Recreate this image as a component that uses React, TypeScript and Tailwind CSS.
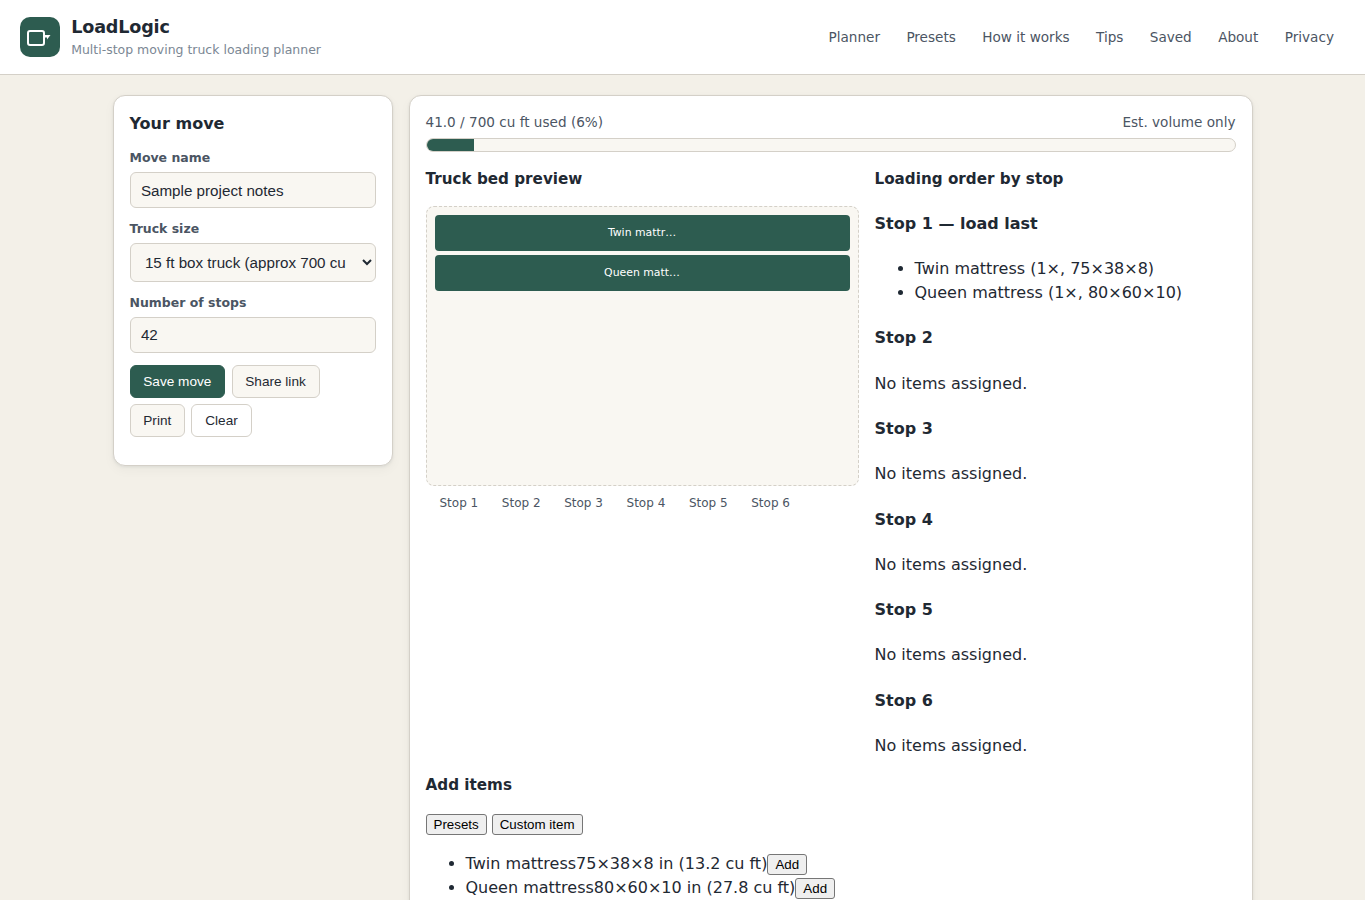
import React from "react";

const nav = ["Planner", "Presets", "How it works", "Tips", "Saved", "About", "Privacy"];
const emptyStops = [2, 3, 4, 5, 6];
const presets = [
  { name: "Twin mattress", size: "75×38×8 in (13.2 cu ft)" },
  { name: "Queen mattress", size: "80×60×10 in (27.8 cu ft)" },
];

const card =
  "rounded-[12px] border border-[#d4d0c8] bg-white p-4 shadow-[0_1px_3px_rgba(31,41,51,0.08),0_4px_12px_rgba(31,41,51,0.04)]";
const field =
  "block w-full rounded-[6px] border border-[#d4d0c8] bg-[#f9f7f2] px-[10.4px] font-['Liberation_Sans',sans-serif] text-[15.2px] text-[#1f2933]";
const label = "mb-[4.8px] block text-[12.48px] font-semibold leading-[19.2px] text-[#4b5563]";
const btn =
  "h-[33px] rounded-[6px] border px-[12.8px] font-['Liberation_Sans',sans-serif] text-[13.6px] leading-none";
const plainBtn =
  "h-[21px] rounded-[3px] border border-[#767676] bg-[#efefef] px-[7px] font-['Liberation_Sans',sans-serif] text-[13.333px] leading-[15px] text-black";

function Logo() {
  return (
    <svg width="40" height="40" viewBox="0 0 40 40" fill="none">
      <rect width="40" height="40" rx="10" fill="#2d5c50" />
      <rect x="8" y="14" width="16" height="14" rx="2" stroke="#fff" strokeWidth="2" />
      <path d="M24 18h6.5l-3.5 4.5v-2h-3z" fill="#fff" />
    </svg>
  );
}

function Header() {
  return (
    <header className="flex h-[75px] items-center justify-between border-b border-[#d4d0c8] bg-white px-5">
      <div className="flex items-center gap-[11.2px]">
        <Logo />
        <div>
          <div className="text-[17.6px] font-bold leading-[26.4px] tracking-[-0.01em]">LoadLogic</div>
          <div className="text-[12.48px] leading-[18.7px] text-[#7b8794]">Multi-stop moving truck loading planner</div>
        </div>
      </div>
      <nav className="mr-[0.7px] flex gap-[5.6px] text-[13.6px] text-[#4b5563]">
        {nav.map((n) => (
          <a key={n} className="px-[10.4px]">{n}</a>
        ))}
      </nav>
    </header>
  );
}

function MovePanel() {
  return (
    <aside className={`${card} h-[371px]`}>
      <h2 className="mb-3 text-[16px] font-bold leading-6">Your move</h2>
      <label className={label}>Move name</label>
      <input className={`${field} mb-[11px] h-9`} defaultValue="Sample project notes" />
      <label className={label}>Truck size</label>
      <select className={`${field} mb-[11px] h-[39px]`}>
        <option>15 ft box truck (approx 700 cu ft)</option>
      </select>
      <label className={label}>Number of stops</label>
      <input className={`${field} mb-3 h-9 pb-[2px]`} defaultValue="42" />
      <div className="flex flex-wrap gap-[6.4px]">
        <button className={`${btn} border-[#2d5c50] bg-[#2d5c50] text-white`}>Save move</button>
        <button className={`${btn} border-[#d4d0c8] bg-[#f9f7f2]`}>Share link</button>
        <button className={`${btn} border-[#d4d0c8] bg-[#f9f7f2]`}>Print</button>
        <button className={`${btn} border-[#d4d0c8] bg-white`}>Clear</button>
      </div>
    </aside>
  );
}

function TruckBed() {
  return (
    <section>
      <h3 className="mb-[15.2px] text-[15.2px] font-bold leading-[22.8px]">Truck bed preview</h3>
      <div className="flex h-[280px] flex-col gap-1 rounded-[8px] border border-dashed border-[#d4d0c8] bg-[#f9f7f2] p-2">
        {["Twin mattr…", "Queen matt…"].map((t) => (
          <div key={t} className="flex h-9 items-center justify-center rounded-[4px] bg-[#2d5c50] text-[10.88px] leading-4 text-white">
            {t}
          </div>
        ))}
      </div>
      <div className="mt-2 flex gap-[23.6px] px-[14px] text-[12px] leading-[18px] text-[#4b5563]">
        {[1, 2, 3, 4, 5, 6].map((n) => (
          <span key={n}>Stop {n}</span>
        ))}
      </div>
    </section>
  );
}

function LoadingOrder() {
  return (
    <section>
      <h3 className="mb-[21.28px] text-[15.2px] font-bold leading-[22.8px]">Loading order by stop</h3>
      <h4 className="mb-[21.28px] font-bold">Stop 1 — load last</h4>
      <ul className="mb-[21.15px] list-disc pl-10">
        <li>Twin mattress (1×, 75×38×8)</li>
        <li>Queen mattress (1×, 80×60×10)</li>
      </ul>
      {emptyStops.map((n) => (
        <div key={n} className="mb-[21.28px] last:mb-4">
          <h4 className="mb-[21.28px] font-bold">Stop {n}</h4>
          <p>No items assigned.</p>
        </div>
      ))}
    </section>
  );
}

export default function App() {
  return (
    <div className="h-[900px] overflow-hidden bg-[#f3f0e8] font-['DejaVu_Sans',sans-serif] text-[16px] leading-6 text-[#1f2933]">
      <Header />
      <main className="mx-auto mt-5 grid w-[1140px] grid-cols-[280px_1fr] items-start gap-4">
        <MovePanel />
        <div className={`${card} h-[900px]`}>
          <div className="mb-[5.6px] flex justify-between text-[13.6px] leading-[20.4px] text-[#4b5563]">
            <span>41.0 / 700 cu ft used (6%)</span>
            <span>Est. volume only</span>
          </div>
          <div className="mb-4 h-[14px] overflow-hidden rounded-full border border-[#d4d0c8] bg-[#f9f7f2]">
            <div className="h-full w-[5.86%] bg-[#2d5c50]" />
          </div>
          <div className="grid grid-cols-[433px_1fr] gap-4">
            <TruckBed />
            <LoadingOrder />
          </div>
          <h3 className="mb-[17.4px] text-[15.2px] font-bold leading-[22.8px]">Add items</h3>
          <div className="flex gap-[5px]">
            <button className={plainBtn}>Presets</button>
            <button className={plainBtn}>Custom item</button>
          </div>
          <ul className="mt-[16.8px] list-disc pl-10">
            {presets.map((p) => (
              <li key={p.name}>
                {p.name}
                {p.size}
                <button className={plainBtn}>Add</button>
              </li>
            ))}
          </ul>
        </div>
      </main>
    </div>
  );
}
